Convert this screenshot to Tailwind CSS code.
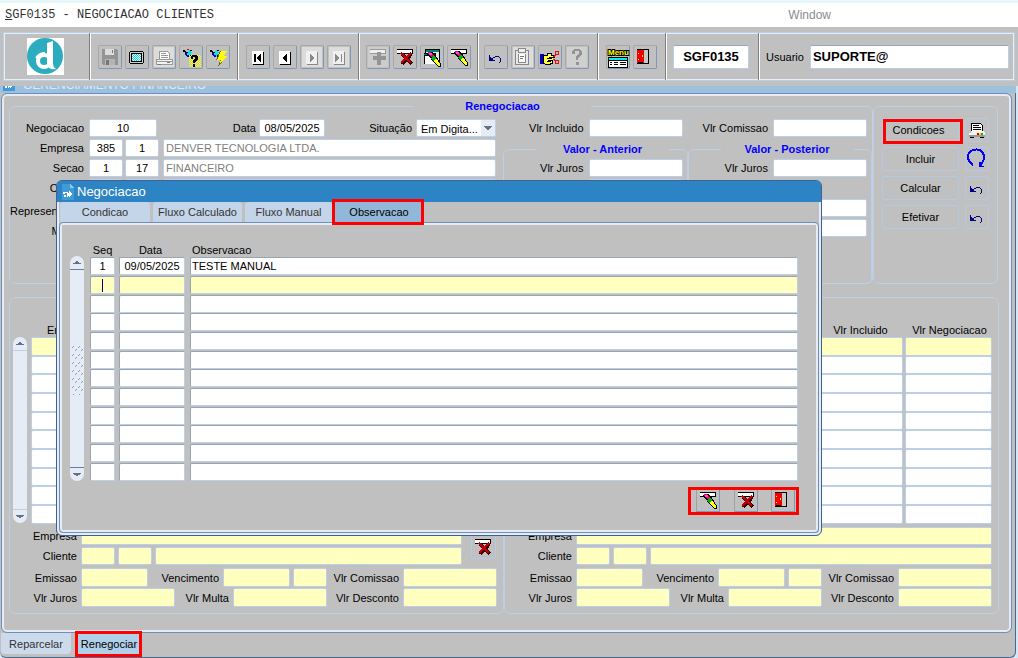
<!DOCTYPE html>
<html lang="pt-br">
<head>
    <title>SGF0135 - Negociacao Clientes</title>
    <meta charset="UTF-8">
    <meta name="viewport" content="width=device-width, initial-scale=1.0">
    <script src="https://cdn.jsdelivr.net/npm/@tailwindcss/browser@4"></script>
</head>
<body class="bg-[#c0c0c0] font-['Liberation_Sans',Arial,sans-serif] text-[11px] leading-[14px] text-black overflow-x-hidden [shape-rendering:crispEdges]">

    <!-- Ícones -->
    <svg class="absolute size-0" aria-hidden="true">
        <defs>
            <pattern id="pontos" width="2" height="2" patternUnits="userSpaceOnUse">
                <rect width="2" height="2" fill="#fff"/><path d="M0 0h1v1H0zM1 1h1v1H1z" fill="#00e0e8"/>
            </pattern>
            <pattern id="pontos-am" width="2" height="2" patternUnits="userSpaceOnUse">
                <path d="M0 0h1v1H0zM1 1h1v1H1z" fill="#ffff00"/>
            </pattern>
            <pattern id="garra" width="6" height="8" patternUnits="userSpaceOnUse">
                <path d="M1 4h1v1H1zM2 3h1v1H2zM4 8h1V7H4zM5 6h1v1H5z" fill="#8ba0bd"/>
            </pattern>
            <symbol id="i-salvar" viewBox="0 0 24 24">
                <path d="M4 4h15v1h1v15H5v-1H4z" fill="#949494"/><path d="M7 4h9v6H7z" fill="#dcdcdc"/><path d="M14 5h1v3h-1z" fill="#777"/><path d="M7 14h10v6H7z" fill="#b4b4b4"/><path d="M8 15h3v5H8z" fill="#777"/>
            </symbol>
            <symbol id="i-tela" viewBox="0 0 24 24">
                <path d="M5 6h13v1h1v11h-1v1H5v-1H4V7h1z" fill="#000"/><path d="M5 7h13v11H5z" fill="#d0d0d0"/><path d="M6 8h11v9H6z" fill="#000"/><rect x="7" y="9" width="9" height="7" fill="url(#pontos)"/>
            </symbol>
            <symbol id="i-impressora-off" viewBox="0 0 24 24">
                <path d="M2 2h20v20H2z" fill="#dcdcdc"/><path d="M7 6h9v1h1v1h1v6H7z" fill="#999"/><path d="M8 7h8v1h1v6H8z" fill="#fff"/><path d="M9 8h5v1H9zM9 10h7v1H9zM9 12h7v1H9z" fill="#999"/><path d="M4 14h17v6H4z" fill="#999"/><path d="M5 15h15v1H5zM5 17h15v2H5z" fill="#f2f2f2"/><path d="M15 17h3v1h-3zM6 19h3v1H6z" fill="#777"/>
            </symbol>
            <symbol id="i-impressora" viewBox="0 0 24 24">
                <path d="M6 5h10v1h1v1h1v7H6z" fill="#000"/><path d="M7 6h9v1h1v7H7z" fill="#fff"/><path d="M8 7h6v1H8zM8 9h8v1H8zM8 11h8v1H8z" fill="#000"/><path d="M6 13h13v1h1v5H4v-4h2z" fill="#f2f2f2"/><path d="M4 17h16v2H4z" fill="#999"/><path d="M12 15h2v2h-2z" fill="#e00000"/><path d="M14 15h2v2h-2z" fill="#ffd800"/><path d="M16 15h2v2h-2z" fill="#00c000"/><path d="M5 19h4v1H5zM15 19h4v1h-4z" fill="#000"/>
            </symbol>
            <symbol id="i-lanterna" viewBox="0 0 24 24">
                <path d="M4 5h2v1h1v1h2v1H7v1H6V7H4z" fill="#000"/><path d="M7 8h2V6h1V5h2v2h1v1h-1v3h-2v1H9v-1H8v-1H7z" fill="#00e5ee"/><path d="M6 8h2v2h2v2H8v-1H7v-1H6z" fill="#0000c8"/><path d="M11 5h2v1h-2zM11 10h1v2h-1z" fill="#000"/>
            </symbol>
            <symbol id="i-consulta" viewBox="0 0 24 24">
                <use href="#i-lanterna"/><path d="M8 4h2v1H8z" fill="#d00"/><path d="M10 10h12v12H10z" fill="url(#pontos-am)"/><path d="M13 10h5v1h1v4h-1v1h-1v1h-1v1h-2v-3h1v-1h1v-2h-2v2h-2v-3h1zM14 19h2v3h-2z" fill="#000"/>
            </symbol>
            <symbol id="i-executa" viewBox="0 0 24 24">
                <use href="#i-lanterna"/><path d="M14 6h7l-3 5h3l-9 11 2-7h-4z" fill="#6b6b00"/><path d="M15 6h6l-3 5h3l-8 9 2-5h-4z" fill="#ffff00"/>
            </symbol>
            <symbol id="i-primeiro" viewBox="0 0 24 24">
                <path d="M7 7h11v13H7z" fill="#000"/><path d="M6 6h11v13H6z" fill="#fff"/><path d="M8 9h2v8H8zM14 9h1v8h-1v-1h-1v-1h-1v-1h-1v-2h1v-1h1v-1h1z" fill="#000"/>
            </symbol>
            <symbol id="i-anterior" viewBox="0 0 24 24">
                <path d="M7 7h11v13H7z" fill="#000"/><path d="M6 6h11v13H6z" fill="#fff"/><path d="M13 9h1v8h-1v-1h-1v-1h-1v-1h-1v-2h1v-1h1v-1h1z" fill="#000"/>
            </symbol>
            <symbol id="i-proximo" viewBox="0 0 24 24">
                <path d="M2 2h20v20H2z" fill="#dcdcdc"/><path d="M7 7h11v13H7z" fill="#888"/><path d="M6 6h11v13H6z" fill="#f0f0f0"/><path d="M10 9h1v1h1v1h1v1h1v2h-1v1h-1v1h-1v1h-1z" fill="#888"/>
            </symbol>
            <symbol id="i-ultimo" viewBox="0 0 24 24">
                <path d="M2 2h20v20H2z" fill="#dcdcdc"/><path d="M7 7h11v13H7z" fill="#888"/><path d="M6 6h11v13H6z" fill="#f0f0f0"/><path d="M8 9h1v1h1v1h1v1h1v2h-1v1h-1v1H9v1H8zM14 9h1v8h-1z" fill="#888"/>
            </symbol>
            <symbol id="i-inserir" viewBox="0 0 24 24">
                <path d="M2 2h20v20H2z" fill="#ccc"/><path d="M4 4h16v5H4z" fill="#999"/><path d="M4 5h15v3H4z" fill="#f0f0f0"/><path d="M11 7h4v4h5v4h-5v5h-4v-5H7v-4h4z" fill="#949494"/>
            </symbol>
            <symbol id="i-barra" viewBox="0 0 24 24">
                <path d="M4 4h16v5H4z" fill="#000"/><path d="M4 5h15v3H4z" fill="#fff"/>
            </symbol>
            <symbol id="i-excluir" viewBox="0 0 24 24">
                <use href="#i-barra"/><path d="M9 9l10 10M18 9L9 19" stroke="#400000" stroke-width="4"/><path d="M8 8l10 10M18 8L8 18" stroke="#c00008" stroke-width="2"/>
            </symbol>
            <symbol id="i-pincel" viewBox="0 0 24 24">
                <path d="M8 6h4l4 4 5 8v3h-3l-7-8-4-4z" fill="#000"/><path d="M8 6h3l3 4-2 2-4-4z" fill="#e01050"/><path d="M9 7h3v2H9z" fill="#ff40ff"/><path d="M11 12l3-2 2 2-3 3z" fill="#00b020"/><path d="M13 15l3-3 4 6v2h-2z" fill="#ffff20"/>
            </symbol>
            <symbol id="i-limpar" viewBox="0 0 24 24">
                <use href="#i-barra"/><use href="#i-pincel"/>
            </symbol>
            <symbol id="i-limpar-tela" viewBox="0 0 24 24">
                <path d="M5 4h15v13H5z" fill="#000"/><path d="M6 5h13v2H6z" fill="#008080"/><path d="M6 7h13v9H6z" fill="#e8e8e8"/><path d="M4 8h12v11H4z" fill="#000"/><path d="M4 9h11v1H4z" fill="#008080"/><path d="M5 11h10v8H5z" fill="#fff"/><use href="#i-pincel" y="1"/>
            </symbol>
            <symbol id="i-desfazer" viewBox="0 0 24 24">
                <path d="M5 10h1v2h1v1h1v1h1v1h2v1H5zM8 13h1v-1h2v-1h4v1h1v1h1v4h-1v1h-1v-1h1v-4h-1v-1h-4v1h-2v1H8z" fill="#000080"/>
            </symbol>
            <symbol id="i-lista" viewBox="0 0 24 24">
                <path d="M2 2h20v20H2z" fill="#dcdcdc"/><path d="M4 5h14v15H4z" fill="#888"/><path d="M5 6h12v13H5z" fill="#e8e8e8"/><path d="M7 3h8v5H7z" fill="#888"/><path d="M8 4h6v3H8z" fill="#eee"/><path d="M7 9h8v9H7z" fill="#888"/><path d="M8 9h6v8H8z" fill="#fff"/><path d="M9 11h4v1H9zM9 13h3v1H9z" fill="#777"/>
            </symbol>
            <symbol id="i-editar" viewBox="0 0 24 24">
                <path d="M2 9h4v10H2z" fill="#0000c0"/><path d="M5 10h4V8h5v2h3v3h-2v6h-2v1H7v-1H5z" fill="#000"/><path d="M6 11h4V9h3v2h3v1h-5v1h4v2h-5v1h4v2h-2v1H7v-1H6z" fill="#ffff40"/><path d="M9 13h5v1H9zM9 16h4v1H9z" fill="#000"/><path d="M15 12l3-2M15 14l3 2" stroke="#e01010"/><circle cx="19" cy="8" r="2" fill="none" stroke="#e01010"/><circle cx="19" cy="17" r="2" fill="none" stroke="#e01010"/>
            </symbol>
            <symbol id="i-ajuda" viewBox="0 0 24 24">
                <path d="M2 2h20v20H2z" fill="#d0d0d0"/><path d="M9 4h6v1h1v1h1v4h-1v1h-1v1h-1v1h-1v2h-2v-4h1v-1h1V9h1V6h-4v3H7V6h1V5h1zM11 17h3v3h-3z" fill="#949494"/>
            </symbol>
            <symbol id="i-menu" viewBox="0 0 24 24">
                <text x="2" y="10" font-family="Liberation Sans, Arial, sans-serif" font-size="8" font-weight="bold" fill="#ffff00" stroke="#000" stroke-width="2" paint-order="stroke">Menu</text>
                <path d="M2 12h20v11H2z" fill="#000"/><path d="M3 13h18v2H3z" fill="#00f0f0"/><path d="M3 16h18v6H3z" fill="#fff"/><path d="M4 17h2v1H4zM8 17h4v1H8zM14 17h6v1h-6zM4 19h2v1H4zM8 19h4v1H8zM14 19h6v1h-6z" fill="#000"/>
            </symbol>
            <symbol id="i-sair" viewBox="0 0 24 24">
                <path d="M4 4h12v15H4z" fill="#000"/><path d="M11 5h4v13h-4z" fill="#c8c8c8"/><path d="M4 5h7v13h-1v-1H5v1H4z" fill="#f00000"/><path d="M5 8h1v1H5zM5 14h1v1H5zM9 10h1v2H9z" fill="#ff0"/>
            </symbol>
            <symbol id="i-atualizar" viewBox="0 0 24 24">
                <path d="M8 18C3 15 1 9 5 5c4-4 11-3 13 1 2 4 1 8-2 11" fill="none" stroke="#0000ff" stroke-width="2"/><path d="M13 20h6v-1h-2v-2h-1v-2h-2v5z" fill="#0000ff"/>
            </symbol>
            <symbol id="i-form" viewBox="0 0 12 16">
                <path d="M0 0h8l4 4v12H0z" fill="#3f9bd8"/><path d="M8 0v4h4z" fill="#8ec6ea"/><circle cx="4" cy="10" r="2" fill="none" stroke="#fff" stroke-width="2" stroke-dasharray="2 1"/><path d="M7 7l4 3-4 3z" fill="#fff"/>
            </symbol>
            <symbol id="i-cima" viewBox="0 0 14 14"><path d="M3 9h8v-1h-1V7H9V6H8V5H6v1H5v1H4v1H3z" fill="#66708c"/></symbol>
            <symbol id="i-baixo" viewBox="0 0 14 14"><path d="M3 5h8v1h-1v1H9v1H8v1H6V8H5V7H4V6H3z" fill="#66708c"/></symbol>
        </defs>
    </svg>

    <div class="relative min-h-screen flex flex-col">
        <div class="h-[3px] bg-[#e6f7f9]"></div>

        <!-- Menu -->
        <nav class="h-6 bg-white flex items-center justify-between pl-[5px] pr-[187px] text-[12px]">
            <a href="#" class="font-['Liberation_Mono',monospace] text-[#333]"><span class="underline">S</span>GF0135 - NEGOCIACAO CLIENTES</a>
            <a href="#" class="text-[#8c8c8c]">Window</a>
        </nav>

        <!-- Barra de ferramentas -->
        <div class="pt-[5px] pb-[5px] pl-[3px] pr-[3px]">
            <div id="toolbar" class="h-[49px] flex border border-[#b9cfe8] shadow-[inset_0_0_0_1px_#e6eef8]">
                <div class="w-[86px] flex items-center justify-center pr-[2px] border-r border-[#808080]">
                    <svg class="size-[37px] [shape-rendering:auto]" viewBox="0 0 37 37"><rect width="37" height="37" fill="#fff"/><circle cx="18" cy="18" r="18" fill="#2badbf"/><circle cx="17" cy="23" r="6" fill="none" stroke="#fff" stroke-width="4"/><path d="M20 5l6-2v22c0 3 1 5 3 6-5 1-9-1-9-6z" fill="#fff"/><path d="M9 20c2-3 5-5 9-5" fill="none" stroke="#fff" stroke-width="2"/></svg>
                </div>
                <div class="w-[148px] flex items-center gap-[3px] pl-[7px] border-l border-l-white border-r border-r-[#808080]" data-icones="salvar:Salvar tela:Tela impressora-off:Imprimir consulta:Consultar executa:Executar"></div>
                <div class="w-[121px] flex items-center gap-[3px] pl-[7px] border-l border-l-white border-r border-r-[#808080]" data-icones="primeiro:Primeiro anterior:Anterior proximo:Proximo ultimo:Ultimo"></div>
                <div class="w-[119px] flex items-center gap-[3px] pl-[6px] border-l border-l-white border-r border-r-[#808080]" data-icones="inserir:Inserir excluir:Excluir limpar-tela:Limpar_tela limpar:Limpar"></div>
                <div class="w-[120px] flex items-center gap-[3px] pl-[5px] border-l border-l-white border-r border-r-[#808080]" data-icones="desfazer:Desfazer lista:Lista editar:Editar ajuda:Ajuda"></div>
                <div class="w-[68px] flex items-center gap-[3px] pl-[7px] border-l border-l-white border-r border-r-[#808080]" data-icones="menu:Menu sair:Sair"></div>
                <div class="w-[93px] flex items-center pl-[6px] border-l border-l-white border-r border-r-[#808080]">
                    <input aria-label="Programa" value="SGF0135" class="w-[76px] h-6 bg-white border border-[#b9cfe8] border-t-[#9aa5b5] rounded-xs text-center text-[13px] font-bold">
                </div>
                <div class="flex-1 flex items-center gap-[6px] pl-[6px] pr-[5px] border-l border-l-white">
                    <label for="usuario">Usuario</label>
                    <input id="usuario" value="SUPORTE@" class="flex-1 min-w-0 h-6 px-[2px] bg-white border border-[#b9cfe8] border-t-[#9aa5b5] rounded-xs text-[13px] font-bold">
                </div>
            </div>
        </div>

        <div class="flex-1 flex flex-col bg-[#d3e8f4] pr-[2px] pb-[2px]">
            <!-- Título da janela de fundo, cortado pela barra -->
            <div class="h-[7px] bg-[#9dc0df] overflow-hidden flex items-end pl-[3px] pb-[2px]">
                <svg class="w-3 h-4 shrink-0"><use href="#i-form"/></svg>
                <span class="pl-[8px] text-[12px] leading-[12px] text-[#dce9f5]">GERENCIAMENTO FINANCEIRO</span>
            </div>

            <main class="flex-1 flex flex-col bg-[#c0c0c0] border-r border-b border-[#4a6791] rounded-b-md">
                <div class="ml-[1px] mr-[3px] pb-[18px] pl-[7px] pr-[12px] border border-[#6f8fb5] rounded-md shadow-[inset_0_0_0_2px_#e6ecf5]">
                    <div class="flex pt-[5px] pr-px">
                        <fieldset class="flex-1 h-[185px] min-w-0 border border-[#bccfe6] rounded-md">
                            <legend class="ml-[404px] w-[177px] font-bold text-[#0000ff]"><span class="block text-center">Renegociacao</span></legend>
                            <div class="flex h-full pt-[6px]">
                                <div class="flex-1 min-w-0 flex flex-col gap-[2px]">
                                    <div class="flex items-center h-[18px]">
                                        <label for="neg" class="w-[74px] mr-[5px] text-right">Negociacao</label>
                                        <input id="neg" value="10" class="w-[68px] h-[18px] bg-white border border-[#bccfe6] rounded-xs text-center">
                                        <label for="data" class="w-[99px] mr-[3px] text-right">Data</label>
                                        <input id="data" value="08/05/2025" class="w-[66px] h-[18px] bg-white border border-[#bccfe6] rounded-xs text-center">
                                        <label for="sit" class="w-[87px] mr-[4px] text-right">Situação</label>
                                        <div class="relative flex-1 min-w-0 h-[18px]">
                                            <select id="sit" class="appearance-none w-full h-[18px] pl-[4px] pt-[2px] bg-white border border-[#bccfe6] rounded-xs"><option>Em Digita...</option></select>
                                            <svg class="absolute right-[1px] top-[1px] w-[14px] h-[16px] bg-[#e6ecf5] pointer-events-none" viewBox="0 0 14 14"><use href="#i-baixo"/></svg>
                                        </div>
                                    </div>
                                    <div class="flex items-center h-[18px]">
                                        <label for="emp" class="w-[74px] mr-[5px] text-right">Empresa</label>
                                        <input id="emp" value="385" class="w-[34px] h-[18px] mr-[2px] bg-white border border-[#bccfe6] rounded-xs text-center">
                                        <input aria-label="Filial" value="1" class="w-[34px] h-[18px] mr-[4px] bg-white border border-[#bccfe6] rounded-xs text-center">
                                        <input aria-label="Nome da empresa" value="DENVER TECNOLOGIA LTDA." class="flex-1 min-w-0 h-[18px] px-[2px] bg-white border border-[#bccfe6] rounded-xs text-[#808080]">
                                    </div>
                                    <div class="flex items-center h-[18px]">
                                        <label for="sec" class="w-[74px] mr-[5px] text-right">Secao</label>
                                        <input id="sec" value="1" class="w-[34px] h-[18px] mr-[2px] bg-white border border-[#bccfe6] rounded-xs text-center">
                                        <input aria-label="Secao" value="17" class="w-[34px] h-[18px] mr-[4px] bg-white border border-[#bccfe6] rounded-xs text-center">
                                        <input aria-label="Nome da secao" value="FINANCEIRO" class="flex-1 min-w-0 h-[18px] px-[2px] bg-white border border-[#bccfe6] rounded-xs text-[#808080]">
                                    </div>
                                    <div class="flex items-center h-[18px]">
                                        <label for="cli" class="w-[74px] mr-[5px] text-right">Cliente</label>
                                        <input id="cli" class="w-[34px] h-[18px] mr-[2px] bg-white border border-[#bccfe6] rounded-xs">
                                        <input aria-label="Loja" class="w-[34px] h-[18px] mr-[4px] bg-white border border-[#bccfe6] rounded-xs">
                                        <input aria-label="Nome do cliente" class="flex-1 min-w-0 h-[18px] bg-white border border-[#bccfe6] rounded-xs">
                                    </div>
                                    <div class="flex items-center h-[24px]"><span class="w-[74px]">Representante</span></div>
                                    <div class="flex items-center h-[12px]"><span class="w-[74px] text-right">Motivo</span></div>
                                </div>
                                <div class="w-[369px] ml-[7px]">
                                    <div class="grid grid-cols-2">
                                        <div class="flex items-center justify-end gap-[5px] pr-[5px]">
                                            <label for="vinc">Vlr Incluido</label>
                                            <input id="vinc" class="w-[94px] h-[18px] bg-white border border-[#bccfe6] rounded-xs">
                                        </div>
                                        <div class="flex items-center justify-end gap-[5px] pr-[5px]">
                                            <label for="vcom">Vlr Comissao</label>
                                            <input id="vcom" class="w-[94px] h-[18px] bg-white border border-[#bccfe6] rounded-xs">
                                        </div>
                                    </div>
                                    <div class="grid grid-cols-2 pt-[5px]">
                                        <fieldset class="h-[142px] border border-[#bccfe6] rounded-md">
                                            <legend class="ml-[32px] w-[133px] font-bold text-[#0000ff]"><span class="block text-center">Valor - Anterior</span></legend>
                                            <div class="flex flex-col gap-[2px] items-end pt-[3px] pr-[4px]">
                                                <div class="flex items-center gap-[5px]"><label for="ja">Vlr Juros</label><input id="ja" class="w-[94px] h-[18px] bg-white border border-[#bccfe6] rounded-xs"></div>
                                                <input aria-label="Vlr Multa anterior" class="w-[94px] h-[18px] bg-white border border-[#bccfe6] rounded-xs">
                                            </div>
                                        </fieldset>
                                        <fieldset class="h-[142px] border border-[#bccfe6] rounded-md">
                                            <legend class="ml-[32px] w-[133px] font-bold text-[#0000ff]"><span class="block text-center">Valor - Posterior</span></legend>
                                            <div class="flex flex-col gap-[2px] items-end pt-[3px] pr-[4px]">
                                                <div class="flex items-center gap-[5px]"><label for="jp">Vlr Juros</label><input id="jp" class="w-[94px] h-[18px] bg-white border border-[#bccfe6] rounded-xs"></div>
                                                <div class="h-[18px]"></div>
                                                <input aria-label="Vlr Multa posterior" class="w-[94px] h-[18px] bg-white border border-[#bccfe6] rounded-xs">
                                                <input aria-label="Vlr Total posterior" class="w-[94px] h-[18px] bg-white border border-[#bccfe6] rounded-xs">
                                            </div>
                                        </fieldset>
                                    </div>
                                </div>
                            </div>
                        </fieldset>

                        <div class="w-[125px] mt-[7px] border border-[#bccfe6] rounded-md pt-[11px] pl-[8px] pr-[8px]">
                            <div class="grid grid-cols-[1fr_24px] gap-x-[6px] gap-y-[5px]">
                                <button class="relative h-6 border border-[#b5c9e2] rounded-xs text-center pr-[4px]">Condicoes
                                    <span class="absolute left-0 top-0 w-[80px] h-[25px] border-3 border-[#ff0000]"></span>
                                </button>
                                <button class="h-6 border border-[#b5c9e2] rounded-xs" aria-label="Imprimir"><svg class="size-6 -m-px"><use href="#i-impressora"/></svg></button>
                                <button class="h-6 border border-[#b5c9e2] rounded-xs">Incluir</button>
                                <button class="h-6 border border-[#b5c9e2] rounded-xs" aria-label="Atualizar"><svg class="size-6 -m-px"><use href="#i-atualizar"/></svg></button>
                                <button class="h-6 border border-[#b5c9e2] rounded-xs">Calcular</button>
                                <button class="h-6 border border-[#b5c9e2] rounded-xs" aria-label="Desfazer calculo"><svg class="size-6 -m-px"><use href="#i-desfazer"/></svg></button>
                                <button class="h-6 border border-[#b5c9e2] rounded-xs">Efetivar</button>
                                <button class="h-6 border border-[#b5c9e2] rounded-xs" aria-label="Desfazer efetivacao"><svg class="size-6 -m-px"><use href="#i-desfazer"/></svg></button>
                            </div>
                        </div>
                    </div>

                    <!-- Títulos -->
                    <div class="grid grid-cols-2 mt-[13px]">
                        <section class="border border-[#bccfe6] rounded-md pt-[24px] pb-[6px]">
                            <div class="flex pl-[3px] pr-[6px]">
                                <div class="w-[14px] h-[186px] mt-[15px] mr-[4px] flex flex-col justify-between bg-[#e6ecf5] rounded-full">
                                    <svg class="size-[14px] border-b border-[#bccfe6]"><use href="#i-cima"/></svg>
                                    <svg class="size-[14px] border-t border-[#bccfe6]"><use href="#i-baixo"/></svg>
                                </div>
                                <table class="flex-1">
                                    <thead><tr><th class="h-[15px] pl-[16px] text-left font-normal">Emissao</th></tr></thead>
                                    <tbody data-linhas="1"></tbody>
                                </table>
                            </div>
                            <div class="relative" data-detalhe="e"></div>
                        </section>
                        <section class="border border-[#bccfe6] rounded-md pt-[24px] pb-[6px]">
                            <div class="flex justify-end pr-[4px]">
                                <table class="w-[267px] table-fixed">
                                    <thead><tr><th class="h-[15px] font-normal"></th><th class="h-[15px] font-normal">Vlr Incluido</th><th class="h-[15px] font-normal">Vlr Negociacao</th></tr></thead>
                                    <tbody data-linhas="3"></tbody>
                                </table>
                            </div>
                            <div class="relative" data-detalhe="d"></div>
                        </section>
                    </div>
                </div>

                <!-- Abas inferiores -->
                <div class="flex items-start h-[24px] pl-px">
                    <button class="w-[70px] h-[21px] bg-[#ccdaec] text-[#333] rounded-b-sm">Reparcelar</button>
                    <button class="relative ml-[6px] w-[64px] h-[21px] bg-[#b0cfe8]">Renegociar
                        <span class="absolute -left-[2px] -top-[2px] w-[67px] h-[26px] border-3 border-[#ff0000]"></span>
                    </button>
                </div>
            </main>
        </div>

        <!-- Janela Negociacao -->
        <div role="dialog" aria-label="Negociacao" class="absolute left-[56px] top-[180px] right-[196px] bg-[#c0c0c0] border border-[#3f6292] rounded-md shadow-[inset_0_0_0_2px_#e6ecf5] pb-[2px]">
            <div class="h-[21px] flex items-center gap-[3px] pl-[5px] bg-[#2c84c4] rounded-t-sm text-white text-[13px]">
                <svg class="w-3 h-4"><use href="#i-form"/></svg>
                <span>Negociacao</span>
            </div>
            <div class="flex gap-[3px] pl-[3px] h-[20px]">
                <button class="w-[90px] bg-[#c5d5e9] text-[#333] rounded-t-sm">Condicao</button>
                <button class="w-[89px] bg-[#c5d5e9] text-[#333] rounded-t-sm">Fluxo Calculado</button>
                <button class="w-[87px] bg-[#c5d5e9] text-[#333] rounded-t-sm">Fluxo Manual</button>
                <button class="relative w-[88px] bg-[#93b7d8]">Observacao
                    <span class="absolute -left-[3px] -top-[3px] w-[92px] h-[26px] border-3 border-[#ff0000]"></span>
                </button>
            </div>
            <div class="mx-[2px] border border-[#6f8fb5] rounded-sm shadow-[inset_0_0_0_2px_#e6ecf5] pt-[19px] pl-[10px] pr-[20px] pb-[17px]">
                <div class="flex">
                    <div class="relative w-[14px] h-[225px] mt-[14px] mr-[6px] flex flex-col justify-between bg-[#e6ecf5] rounded-full">
                        <svg class="size-[14px] border-b border-[#66809f]"><use href="#i-cima"/></svg>
                        <svg class="w-[12px] h-[52px] self-center"><rect width="12" height="52" fill="url(#garra)"/></svg>
                        <svg class="size-[14px] border-t border-[#66809f]"><use href="#i-baixo"/></svg>
                    </div>
                    <table class="flex-1 h-[239px]">
                        <thead>
                            <tr class="h-[15px]">
                                <th class="w-[29px] pr-[4px] font-normal">Seq</th>
                                <th class="w-[71px] pr-[8px] font-normal">Data</th>
                                <th class="pl-[2px] text-left font-normal">Observacao</th>
                            </tr>
                        </thead>
                        <tbody id="observacoes"></tbody>
                    </table>
                </div>
                <div class="flex justify-end mt-[6px] -mr-px">
                    <div class="w-[111px] h-[28px] flex items-center justify-between pl-[5px] pr-px border-3 border-[#ff0000]">
                        <button class="w-6 h-[22px] border border-[#7f98b8] border-t-0 border-l-[#a0a0a0]" aria-label="Limpar"><svg class="size-6 -m-px -mt-[2px]"><use href="#i-limpar"/></svg></button>
                        <button class="w-6 h-[22px] border border-[#7f98b8] border-t-0 border-l-[#a0a0a0]" aria-label="Excluir"><svg class="size-6 -m-px -mt-[2px]"><use href="#i-excluir"/></svg></button>
                        <button class="w-6 h-[22px] border border-[#7f98b8] border-t-0 border-l-[#a0a0a0]" aria-label="Sair"><svg class="size-6 -m-px -mt-[2px]"><use href="#i-sair"/></svg></button>
                    </div>
                </div>
            </div>
        </div>
    </div>

    <!-- Dados do título selecionado, repetidos nos dois quadros -->
    <template id="detalhe">
        <div class="flex flex-col pr-[6px] pt-[3px]">
            <div class="flex items-center h-[18px] mb-[2px]">
                <label class="w-[67px] mr-[4px] text-right">Empresa</label>
                <input class="flex-1 min-w-0 h-[18px] bg-[#ffffc0] border border-[#bccfe6] rounded-xs">
                <span data-reserva class="w-[35px]"></span>
            </div>
            <div class="flex items-center h-[18px] mb-[3px]">
                <label class="w-[67px] mr-[4px] text-right">Cliente</label>
                <input class="w-[34px] mr-[3px] h-[18px] bg-[#ffffc0] border border-[#bccfe6] rounded-xs">
                <input class="w-[34px] mr-[3px] h-[18px] bg-[#ffffc0] border border-[#bccfe6] rounded-xs">
                <input class="flex-1 min-w-0 h-[18px] bg-[#ffffc0] border border-[#bccfe6] rounded-xs">
                <span data-reserva class="w-[35px]"></span>
            </div>
            <div class="flex items-center h-[19px] mb-px">
                <label class="w-[67px] mr-[4px] text-right">Emissao</label>
                <input class="w-[67px] h-[19px] bg-[#ffffc0] border border-[#bccfe6] rounded-xs">
                <label class="w-[71px] mr-[4px] text-right">Vencimento</label>
                <input class="w-[67px] mr-[3px] h-[19px] bg-[#ffffc0] border border-[#bccfe6] rounded-xs">
                <input class="w-[34px] h-[19px] bg-[#ffffc0] border border-[#bccfe6] rounded-xs">
                <label class="w-[72px] mr-[4px] text-right">Vlr Comissao</label>
                <input class="flex-1 min-w-0 h-[19px] bg-[#ffffc0] border border-[#bccfe6] rounded-xs">
            </div>
            <div class="flex items-center h-[19px]">
                <label class="w-[67px] mr-[4px] text-right">Vlr Juros</label>
                <input class="w-[94px] h-[19px] bg-[#ffffc0] border border-[#bccfe6] rounded-xs">
                <label class="w-[54px] mr-[4px] text-right">Vlr Multa</label>
                <input class="w-[94px] h-[19px] bg-[#ffffc0] border border-[#bccfe6] rounded-xs">
                <label class="w-[72px] mr-[4px] text-right">Vlr Desconto</label>
                <input class="flex-1 min-w-0 h-[19px] bg-[#ffffc0] border border-[#bccfe6] rounded-xs">
            </div>
        </div>
    </template>

    <script>
        // Botões da barra de ferramentas
        document.querySelectorAll('[data-icones]').forEach(grupo => {
            grupo.innerHTML = grupo.dataset.icones.split(' ').map(item => {
                const [icone, nome] = item.split(':');
                return `<button class="size-6 shrink-0 rounded-xs border border-[#7f98b8] border-t-[#a8a8a8] border-l-[#a8a8a8]" aria-label="${nome.replace('_', ' ')}"><svg class="size-6 -m-px"><use href="#i-${icone}"/></svg></button>`;
            }).join('');
        });

        // Linhas dos títulos, a primeira é a selecionada
        document.querySelectorAll('[data-linhas]').forEach(corpo => {
            for (let i = 0; i < 10; i++) {
                const h = i % 3 === 1 ? 'h-[18px]' : 'h-[19px]';
                const cor = i === 0 ? 'bg-[#ffffc0]' : 'bg-white';
                const celula = `<td class="p-0 pr-[2px] ${h}"><input aria-label="Titulo ${i + 1}" class="block w-full ${h} ${cor} border border-[#bccfe6] rounded-xs"></td>`;
                corpo.insertAdjacentHTML('beforeend', `<tr>${celula.repeat(corpo.dataset.linhas)}</tr>`);
            }
        });

        // Observações
        const registros = [['1', '09/05/2025', 'TESTE MANUAL']];
        const observacoes = document.getElementById('observacoes');
        for (let i = 0; i < 12; i++) {
            const r = registros[i] || ['', '', ''];
            const cor = i === 1 ? 'bg-[#ffffc0]' : 'bg-white';
            const campo = `h-[18px] block w-full border border-[#bccfe6] border-t-[#9aa3b0] border-l-[#9aa3b0] rounded-xs ${cor}`;
            const cursor = i === 1 ? '<span class="absolute left-[12px] top-[3px] w-px h-[13px] bg-[#000080]"></span>' : '';
            observacoes.insertAdjacentHTML('beforeend', `<tr>
                <td class="relative p-0 pr-[4px]"><input aria-label="Seq" value="${r[0]}" class="${campo} text-center">${cursor}</td>
                <td class="p-0 pr-[5px]"><input aria-label="Data" value="${r[1]}" class="${campo} text-center"></td>
                <td class="p-0"><input aria-label="Observacao" value="${r[2]}" class="${campo} pl-px"></td>
            </tr>`);
        }

        // Detalhes
        document.querySelectorAll('[data-detalhe]').forEach(alvo => {
            alvo.append(document.getElementById('detalhe').content.cloneNode(true));
            alvo.querySelectorAll('input').forEach((campo, i) => {
                campo.id = alvo.dataset.detalhe + i;
                const rotulo = campo.previousElementSibling;
                if (rotulo && rotulo.tagName === 'LABEL') rotulo.htmlFor = campo.id;
                else campo.setAttribute('aria-label', 'Complemento');
            });
            if (alvo.dataset.detalhe === 'd') {
                alvo.querySelectorAll('[data-reserva]').forEach(el => el.remove());
            } else {
                alvo.insertAdjacentHTML('beforeend', '<button class="absolute right-[7px] top-[10px] size-[25px] border border-[#b5c9e2] rounded-xs" aria-label="Excluir titulo"><svg class="size-6 -m-px"><use href="#i-excluir"/></svg></button>');
            }
        });
    </script>
</body>
</html>
